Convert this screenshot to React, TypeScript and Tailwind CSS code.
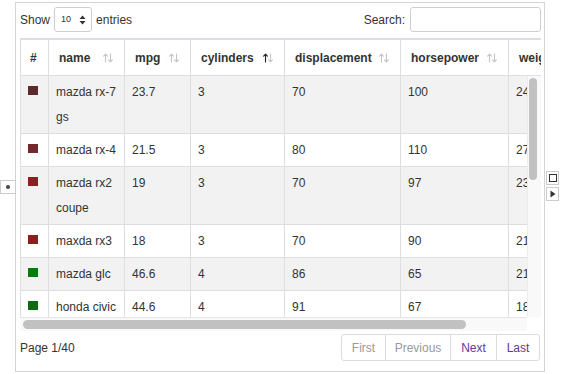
import React from 'react';

type Car = {
  name: string[];
  mpg: string;
  cyl: string;
  disp: string;
  hp: string;
  weight: string;
  accel: string;
  year: string;
  color: string;
};

const cars: Car[] = [
  { name: ['mazda rx-7', 'gs'], mpg: '23.7', cyl: '3', disp: '70', hp: '100', weight: '2420', accel: '12.5', year: '80', color: '#5b2b2e' },
  { name: ['mazda rx-4'], mpg: '21.5', cyl: '3', disp: '80', hp: '110', weight: '2720', accel: '13.5', year: '77', color: '#702a2e' },
  { name: ['mazda rx2', 'coupe'], mpg: '19', cyl: '3', disp: '70', hp: '97', weight: '2330', accel: '13.5', year: '72', color: '#8a2024' },
  { name: ['maxda rx3'], mpg: '18', cyl: '3', disp: '70', hp: '90', weight: '2124', accel: '13.5', year: '73', color: '#8e1d20' },
  { name: ['mazda glc'], mpg: '46.6', cyl: '4', disp: '86', hp: '65', weight: '2110', accel: '17.9', year: '80', color: '#0a7a0a' },
  { name: ['honda civic'], mpg: '44.6', cyl: '4', disp: '91', hp: '67', weight: '1850', accel: '13.8', year: '80', color: '#0e6b14' },
];

const SortIcon = ({ active }: { active?: boolean }) => (
  <svg width="10" height="10" viewBox="0 0 10 10" fill="none" strokeWidth="1.1" strokeLinecap="round" strokeLinejoin="round">
    <g stroke={active ? '#222' : '#c4c4c4'}>
      <path d="M2.5 9V1.2M0.6 3.2L2.5 1.2L4.4 3.2" />
    </g>
    <g stroke="#c4c4c4">
      <path d="M7.5 1V8.8M5.6 6.8L7.5 8.8L9.4 6.8" />
    </g>
  </svg>
);

const HeadCell = ({ label, w, active }: { label: string; w: string; active?: boolean }) => (
  <div className={`${w} shrink-0 h-full border-r border-[#dddde2] pl-[10px] pr-[11px] flex items-center justify-between font-bold`}>
    <span>{label}</span>
    <SortIcon active={active} />
  </div>
);

const Cell = ({ w, children }: { w: string; children: React.ReactNode }) => (
  <div className={`${w} shrink-0 border-r border-[#dddde2] pl-[7px] pt-[4px] pb-[3px] leading-[25px] whitespace-nowrap`}>
    {children}
  </div>
);

const App: React.FC = () => {
  return (
    <div className="relative w-[562px] h-[374px] bg-white text-[12px] text-[#333] font-['Liberation_Sans',Arial,sans-serif] overflow-hidden">
      <div className="ml-[15px] pt-[2px]">
        <div className="w-[530px] h-[370px] border border-[#d4d4d4] pl-[4px] pr-[3px] flex flex-col">
          <div className="mt-[4px] h-[25px] flex items-center justify-between">
            <div className="flex items-center">
              <span>Show</span>
              <div className="ml-[4px] w-[38px] h-[25px] border border-[#cfcfcf] rounded-[3px] flex items-center justify-between pl-[6px] pr-[5px]">
                <span className="text-[9px]">10</span>
                <svg width="7" height="10" viewBox="0 0 7 10">
                  <path d="M3.5 0.5L6.5 4H0.5Z M3.5 9.5L6.5 6H0.5Z" fill="#333" />
                </svg>
              </div>
              <span className="ml-[4px]">entries</span>
            </div>
            <div className="flex items-center">
              <span>Search:</span>
              <div className="ml-[5px] w-[131px] h-[25px] border border-[#cfcfcf] rounded-[3px]" />
            </div>
          </div>

          <div className="mt-[6px] w-[521px] h-[38px] border-t-2 border-b border-[#dddde2] overflow-hidden">
            <div className="flex h-full border-l border-[#dddde2]">
              <div className="w-[28px] shrink-0 h-full border-r border-[#dddde2] pl-[9px] flex items-center font-bold">#</div>
              <HeadCell label="name" w="w-[76px]" />
              <HeadCell label="mpg" w="w-[66px]" />
              <HeadCell label="cylinders" w="w-[94px]" active />
              <HeadCell label="displacement" w="w-[116px]" />
              <HeadCell label="horsepower" w="w-[108px]" />
              <HeadCell label="weight" w="w-[90px]" />
              <HeadCell label="acceleration" w="w-[116px]" />
            </div>
          </div>

          <div className="flex">
            <div className="w-[507px] h-[241px] overflow-hidden">
              {cars.map((c, i) => (
                <div
                  key={c.name.join(' ')}
                  className={`flex border-l border-b border-[#dddde2] ${i % 2 === 0 ? 'bg-[#f2f2f2]' : 'bg-white'}`}
                >
                  <div className="w-[28px] shrink-0 border-r border-[#dddde2] pl-[7px] pt-[10px]">
                    <div className="w-[10px] h-[9px]" style={{ backgroundColor: c.color }} />
                  </div>
                  <Cell w="w-[76px]">
                    {c.name.map((n) => (
                      <div key={n}>{n}</div>
                    ))}
                  </Cell>
                  <Cell w="w-[66px]">{c.mpg}</Cell>
                  <Cell w="w-[94px]">{c.cyl}</Cell>
                  <Cell w="w-[116px]">{c.disp}</Cell>
                  <Cell w="w-[108px]">{c.hp}</Cell>
                  <Cell w="w-[90px]">{c.weight}</Cell>
                  <Cell w="w-[116px]">{c.accel}</Cell>
                </div>
              ))}
            </div>
            <div className="w-[14px] h-[241px] bg-[#f9f9f9] border-l border-[#ececec] pl-[1px] pt-[2px]">
              <div className="w-[8px] h-[102px] rounded-full bg-[#c1c1c1]" />
            </div>
          </div>
          <div className="flex">
            <div className="w-[507px] h-[14px] bg-[#f9f9f9] border-t border-[#e4e4e4] pl-[3px] pt-[2px]">
              <div className="w-[443px] h-[9px] rounded-full bg-[#c1c1c1]" />
            </div>
          </div>

          <div className="mt-[3px] flex items-center justify-between">
            <span>Page 1/40</span>
            <div className="flex h-[27px] border border-[#dcdce0] rounded-[3px] mr-[1px]">
              <div className="w-[44px] flex items-center justify-center border-r border-[#dcdce0] text-[#9a9a9a]">First</div>
              <div className="w-[65px] flex items-center justify-center border-r border-[#dcdce0] text-[#9a9a9a]">Previous</div>
              <div className="w-[46px] flex items-center justify-center border-r border-[#dcdce0] text-[#5e3a9b]">Next</div>
              <div className="w-[42px] flex items-center justify-center text-[#5e3a9b]">Last</div>
            </div>
          </div>
        </div>
      </div>

      <div className="absolute left-0 top-[180px] w-[16px] h-[14px] border border-[#cccccc] bg-white flex items-center justify-center">
        <div className="w-[4px] h-[4px] rounded-full bg-[#444]" />
      </div>
      <div className="absolute left-[546px] top-[171px] w-[13px] h-[14px] border border-[#cccccc] bg-white flex items-center justify-center">
        <div className="w-[8px] h-[8px] border border-[#333]" />
      </div>
      <div className="absolute left-[546px] top-[187px] w-[13px] h-[14px] border border-[#cccccc] bg-white flex items-center justify-center">
        <svg width="6" height="8" viewBox="0 0 6 8">
          <path d="M0.5 0.5L5.5 4L0.5 7.5Z" fill="#333" />
        </svg>
      </div>
    </div>
  );
};

export default App;
